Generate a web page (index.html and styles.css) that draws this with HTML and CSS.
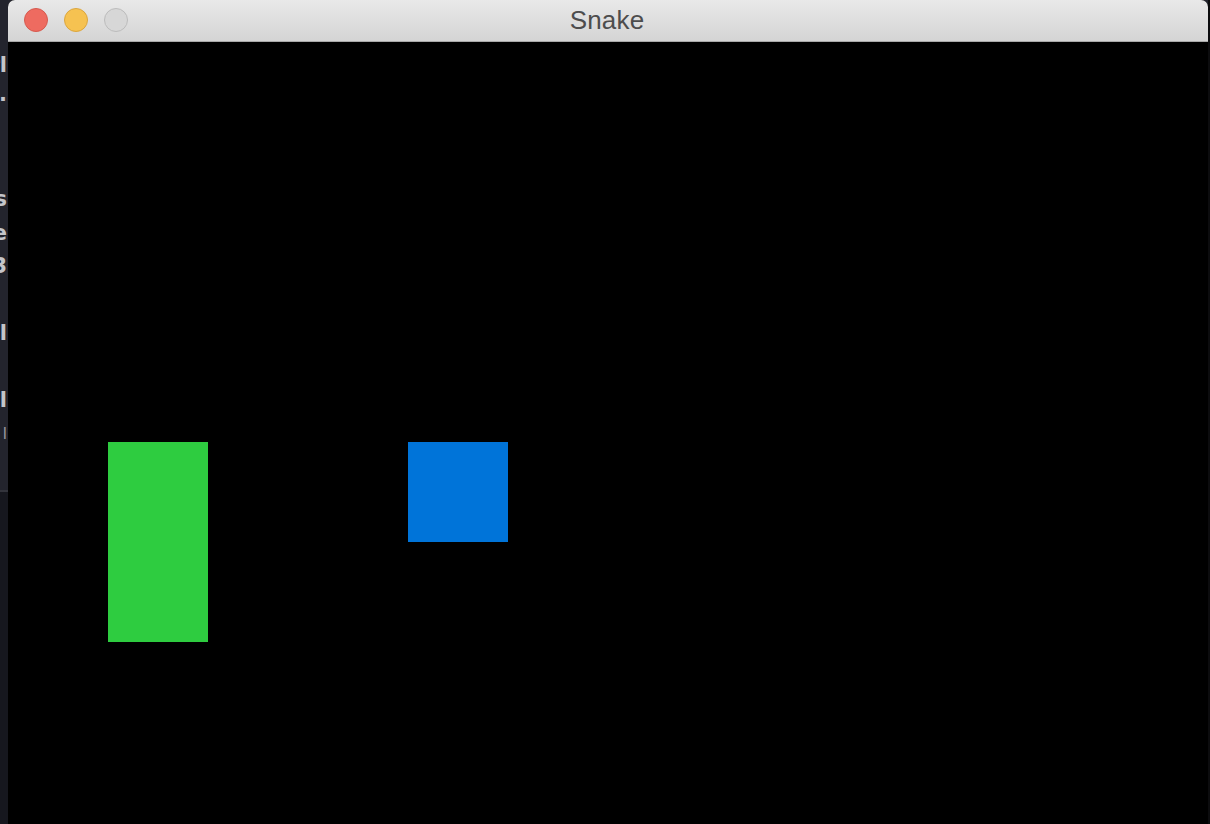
FILE: index.html
```html
<!DOCTYPE html>
<html>
<head>
<meta charset="utf-8">
<title>Snake</title>
<link rel="stylesheet" href="styles.css">
</head>
<body>
<div class="desktop">
  <div class="bg-editor">
    <div class="code">
      <div class="ln">url</div>
      <div class="ln">fn&#183;</div>
      <div class="ln"></div>
      <div class="ln"></div>
      <div class="ln">class</div>
      <div class="ln">line</div>
      <div class="ln">123</div>
      <div class="ln"></div>
      <div class="ln">isl</div>
      <div class="ln"></div>
      <div class="ln">all</div>
      <div class="ln small">l</div>
    </div>
    <div class="editor-foot"></div>
  </div>
  <div class="window">
    <div class="titlebar">
      <div class="lights">
        <span class="light red"></span>
        <span class="light yellow"></span>
        <span class="light gray"></span>
      </div>
      <div class="title">Snake</div>
    </div>
    <div class="board">
      <div class="cell snake"></div>
      <div class="cell food"></div>
    </div>
  </div>
  <div class="bg-right"></div>
</div>
</body>
</html>
```
FILE: styles.css
```css
html, body {
  margin: 0;
  padding: 0;
  width: 1210px;
  height: 824px;
  overflow: hidden;
  background: #000;
  font-family: "Liberation Sans", Arial, sans-serif;
}

.desktop {
  display: flex;
  width: 1210px;
  height: 824px;
  background: #23242d;
}

.bg-editor {
  width: 8px;
  flex: none;
  display: flex;
  flex-direction: column;
  background: #23242d;
  overflow: hidden;
}

.code {
  height: 490px;
  padding-top: 49px;
  box-sizing: border-box;
}

.ln {
  height: 33.5px;
  line-height: 33.5px;
  display: flex;
  justify-content: flex-end;
  padding-right: 1px;
  white-space: nowrap;
  font-size: 21px;
  font-weight: bold;
  color: #c4c5ca;
  font-family: "DejaVu Sans", sans-serif;
  overflow: hidden;
}

.ln.small {
  font-size: 15px;
  font-weight: normal;
  color: #9a9ba1;
}

.editor-foot {
  flex: 1;
  border-top: 2px solid #33343c;
  background: #16171e;
}

.window {
  width: 1200px;
  flex: none;
  display: flex;
  flex-direction: column;
  background: #000;
  border-radius: 7px 7px 0 0;
}

.titlebar {
  height: 41px;
  flex: none;
  position: relative;
  display: flex;
  align-items: center;
  justify-content: center;
  border-radius: 7px 7px 0 0;
  background: linear-gradient(#e9e9e9, #d4d4d4);
  border-bottom: 1px solid #a9a9a9;
}

.lights {
  position: absolute;
  left: 16px;
  top: 8px;
  display: flex;
  gap: 16px;
}

.light {
  width: 22px;
  height: 22px;
  border-radius: 50%;
  border: 1px solid;
}

.red { background: #ee6b60; border-color: #d65a4f; }
.yellow { background: #f6c251; border-color: #dba63f; }
.gray { background: #d7d7d7; border-color: #bcbcbc; }

.title {
  font-size: 26px;
  color: #4d4d4d;
  letter-spacing: 0.2px;
  margin-left: -2px;
}

.board {
  flex: 1;
  display: grid;
  grid-template-columns: repeat(12, 100px);
  grid-template-rows: repeat(8, 100px);
}

.snake {
  grid-column: 2;
  grid-row: 5 / span 2;
  background: #2ecc40;
}

.food {
  grid-column: 5;
  grid-row: 5;
  background: #0074d9;
}

.bg-right {
  flex: 1;
  background: #0c0c0e;
}
```
